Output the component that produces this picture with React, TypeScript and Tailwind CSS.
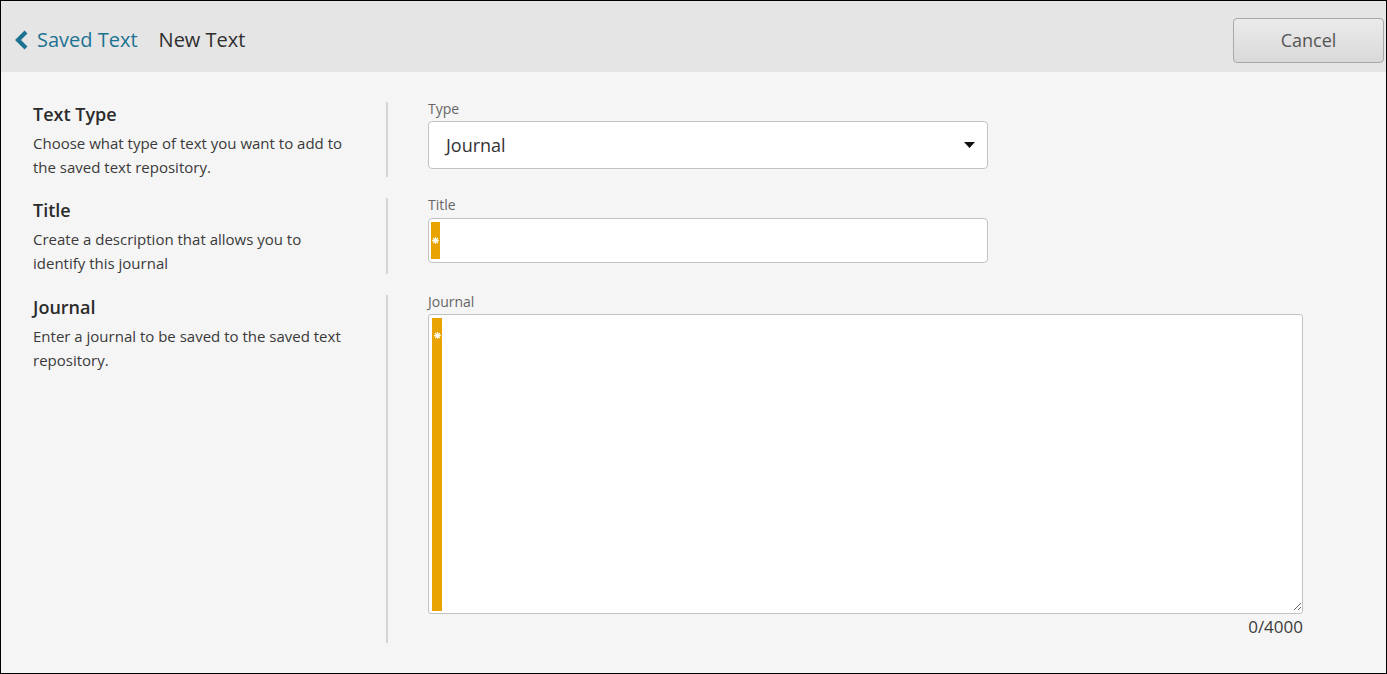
import React from 'react';

const font = { fontFamily: '"Open Sans", "Noto Sans", sans-serif' };

function Star({ size }: { size: number }) {
  return (
    <svg width={size} height={size} viewBox="0 0 8 8">
      <g stroke="#fff" strokeWidth="1.5" strokeLinecap="round">
        <line x1="4" y1="0.8" x2="4" y2="7.2" />
        <line x1="0.8" y1="4" x2="7.2" y2="4" />
        <line x1="1.7" y1="1.7" x2="6.3" y2="6.3" />
        <line x1="6.3" y1="1.7" x2="1.7" y2="6.3" />
      </g>
    </svg>
  );
}

function Side({ title, text, extra }: { title: string; text: string; extra?: string }) {
  return (
    <div className={`mt-[3px] w-[387px] shrink-0 border-r-2 border-[#d6d6d6] pl-[32px] pr-10 ${extra ?? ''}`}>
      <h2 className="text-[18px] leading-[24px] font-semibold text-[#2b2b2b]">{title}</h2>
      <p className="text-[15px] leading-[24px] text-[#3a3a3a] mt-[5px]">{text}</p>
    </div>
  );
}

export default function App() {
  return (
    <div className="h-[674px] w-full border border-black bg-[#f5f5f5] flex flex-col overflow-hidden" style={font}>
      {/* header */}
      <div className="h-[71px] shrink-0 bg-[#e6e5e6] flex items-center pl-[12px] pr-[2px] pt-[7px]">
        <button className="flex items-center text-[#1c7391]">
          <svg width="16" height="20" viewBox="0 0 16 20" className="mr-[8px]">
            <polyline points="13,2 5,10 13,18" fill="none" stroke="#1c7391" strokeWidth="4.2" />
          </svg>
          <span className="text-[20px]">Saved Text</span>
        </button>
        <span className="ml-[21px] text-[20px] text-[#2f2f2f]">New Text</span>
        <button className="ml-auto h-[45px] w-[151px] rounded-[4px] border border-[#a8a8a8] bg-gradient-to-b from-[#ebebeb] to-[#d9d9d9] text-[18px] text-[#555]">
          Cancel
        </button>
      </div>

      {/* form */}
      <div className="flex flex-col gap-[18px] pt-[27px]">
        <div className="flex">
          <Side title="Text Type" text="Choose what type of text you want to add to the saved text repository." extra="h-[75px]" />
          <div className="pl-[40px] flex flex-col">
            <label className="text-[14px] leading-[20px] text-[#666]">Type</label>
            <div className="mt-[2px] h-[48px] w-[560px] rounded-[4px] border border-[#c2c2c2] bg-white flex items-center pl-[17px] pr-[12px]">
              <span className="text-[18px] text-[#333]">Journal</span>
              <svg width="11" height="6" viewBox="0 0 11 6" className="ml-auto">
                <polygon points="0,0 11,0 5.5,6" fill="#111" />
              </svg>
            </div>
          </div>
        </div>

        <div className="flex">
          <Side title="Title" text="Create a description that allows you to identify this journal" extra="h-[76px]" />
          <div className="pl-[40px] flex flex-col">
            <label className="text-[14px] leading-[20px] text-[#666]">Title</label>
            <div className="mt-[3px] h-[45px] w-[560px] rounded-[4px] border border-[#c2c2c2] bg-white flex p-[2px]">
              <div className="flex self-stretch my-[1px]">
                <div className="w-[9px] bg-[#e8a300] flex items-center justify-center">
                  <Star size={7} />
                </div>
              </div>
              <input className="flex-1 outline-none px-2 text-[16px]" />
            </div>
          </div>
        </div>

        <div className="flex">
          <Side title="Journal" text="Enter a journal to be saved to the saved text repository." />
          <div className="pl-[40px] flex flex-col pb-[5px]">
            <label className="text-[14px] leading-[20px] text-[#666]">Journal</label>
            <div className="mt-[2px] h-[300px] w-[875px] rounded-[3px] border border-[#c2c2c2] bg-white flex pt-[3px] pb-[2px] pl-[3px]">
              <div className="w-[10px] shrink-0 self-stretch bg-[#e8a300] flex flex-col items-center pt-[14px]">
                <Star size={7} />
              </div>
              <textarea className="flex-1 outline-none resize px-2 text-[16px]" />
            </div>
            <div className="mt-[2px] text-right text-[17px] leading-[22px] text-[#3c3c3c]">0/4000</div>
          </div>
        </div>
      </div>
    </div>
  );
}
